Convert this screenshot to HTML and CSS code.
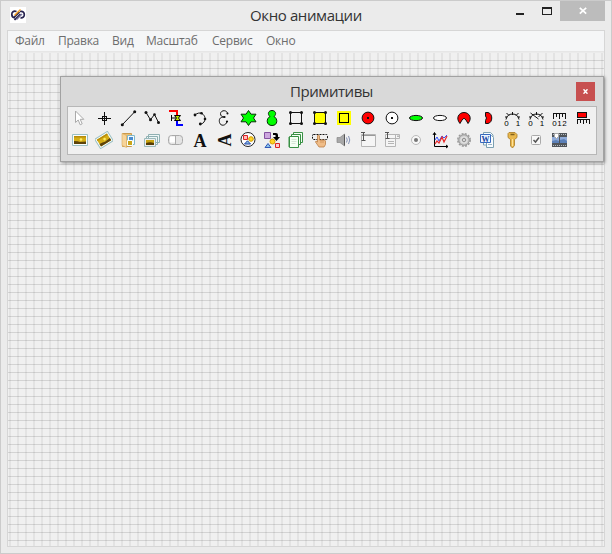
FILE: index.html
```html
<!DOCTYPE html>
<html lang="ru">
<head>
<meta charset="utf-8">
<title>Окно анимации</title>
<link rel="stylesheet" href="styles.css">
</head>
<body>
<div class="window">
  <header class="titlebar">
    <svg class="logo" viewBox="0 0 16 16"><path fill="#fff" d="M0 0h16v16H0z"/><g fill="none" stroke="#27234f" stroke-width="1.700"><path d="M6.500 4.500C3.500 3.500 1.700 5 1.800 7.500c0 2 1 3.200 3.200 3.500"/><path d="M10 4.500c3-.8 4.500 1.200 4.300 3.500-.2 2-1.700 3.200-3.800 2.800"/><path d="M4 10.500L9.500 5M4.500 13l6-6"/></g><path d="M4.500 8.500L10.500 2.500" stroke="#f29a1c" stroke-width="1.500"/><path d="M6.500 12.500L12 7" stroke="#77739a" stroke-width="1.500"/></svg>
    <h1 class="title">Окно анимации</h1>
    <div class="controls">
      <svg class="min" viewBox="0 0 8 20"><path d="M0 12h8v2H0z" fill="#222"/></svg>
      <svg class="max" viewBox="0 0 10 20"><path d="M0 6h10v8H0zM1 8v5h8V8z" fill="#222" fill-rule="evenodd"/></svg>
      <div class="close"><svg viewBox="0 0 8 8"><path d="M.8 .8L7.200 6.700M7.200 .8L.8 6.700" stroke="#fff" stroke-width="1.700"/></svg></div>
    </div>
  </header>
  <main class="client">
    <nav class="menu"><span class="m1">Файл</span><span class="m2">Правка</span><span class="m3">Вид</span><span class="m4">Масштаб</span><span class="m5">Сервис</span><span>Окно</span></nav>
    <div class="canvas"></div>
  </main>
</div>
<section class="palette">
  <header class="palette-head"><h2>Примитивы</h2><div class="palette-close"><svg viewBox="0 0 5 5"><path d="M.5 .3L4.500 4.700M4.500 .3L.5 4.700" stroke="#fff" stroke-width="1.500"/></svg></div></header>
  <div class="tools">
    <svg viewBox="0 0 18 18"><path d="M4.500 2v11.500l2.700-2.500 2 4.800 2-1-2-4.500h3.600z" fill="#fff" stroke="#aaa"/></svg>
    <svg viewBox="0 0 18 18" class="ink"><path d="M3 9.500h13M9.500 3v13M7.500 7.500h4v4h-4z" shape-rendering="crispEdges"/></svg>
    <svg viewBox="0 0 18 18" class="ink"><path d="M3.500 15.500L15.500 3"/><g class="dots"><circle cx="3.300" cy="15.700" r="1.500"/><circle cx="15.700" cy="2.800" r="1.500"/></g></svg>
    <svg viewBox="0 0 18 18" class="ink"><path d="M3 3.500l4.500 7.200 4-5.200 4 8"/><g class="dots"><circle cx="3" cy="3.500" r="1.500"/><circle cx="7.500" cy="10.700" r="1.500"/><circle cx="11.500" cy="5.500" r="1.300"/><circle cx="15.500" cy="13.500" r="1.500"/></g></svg>
    <svg viewBox="0 0 18 18"><g shape-rendering="crispEdges" fill="none" stroke-width="2"><path d="M2 2h8v4" stroke="red"/><path d="M10 12v4h6" stroke="#00f"/></g><path d="M4.500 6v6M4.500 9h5" stroke="#000"/><path d="M7.500 6.500h6L11.500 9l2 2.500h-6L9.500 9z" fill="#b8e000" stroke="#000"/></svg>
    <svg viewBox="0 0 18 18" class="ink"><path d="M4 6C6 4 9 3.500 11 4.500c3 2 4 5.500 2 8.500-1 1.500-2.500 2-4 2.300"/><g class="dots"><circle cx="4" cy="6" r="1.400"/><circle cx="10.500" cy="4.300" r="1.300"/><circle cx="14" cy="10" r="1.300"/><circle cx="9.300" cy="15" r="1.400"/></g></svg>
    <svg viewBox="0 0 18 18" class="ink"><path d="M12.500 5C12.500 .7 6 .7 5.500 4.500 5.500 7 7 8 9.500 8 4 8 4 11 4.500 13.500c1 4 6.500 3.500 7.500-1"/><g class="dots"><circle cx="12.500" cy="4.500" r="1"/><circle cx="9.500" cy="8" r="1.100"/><circle cx="12" cy="12.500" r="1.100"/></g></svg>
    <svg viewBox="0 0 18 18"><path d="M9.500 1.500L12 5.200h5L14.500 9l2.500 3.800h-5l-2.500 3.700L7 12.800H2L4.500 9 2 5.200h5z" fill="#0f0" stroke="#063006"/></svg>
    <svg viewBox="0 0 18 18"><path d="M7 7.500C4 5 5.500 1.500 9 1.500s5 3.500 2 6c4 2 4 9-2 9s-6-7-2-9z" fill="#0f0" stroke="#042604"/></svg>
    <svg viewBox="0 0 18 18" class="ink"><path d="M3.500 3.500h11v11h-11z"/><g class="dots"><circle cx="3.500" cy="3.500" r="1.500"/><circle cx="14.500" cy="3.500" r="1.500"/><circle cx="3.500" cy="14.500" r="1.500"/><circle cx="14.500" cy="14.500" r="1.500"/></g></svg>
    <svg viewBox="0 0 18 18" class="ink"><path d="M3.500 3.500h11v11h-11z" fill="#ff0"/><g class="dots"><circle cx="3.500" cy="3.500" r="1.500"/><circle cx="14.500" cy="3.500" r="1.500"/><circle cx="3.500" cy="14.500" r="1.500"/><circle cx="14.500" cy="14.500" r="1.500"/></g></svg>
    <svg viewBox="0 0 18 18" shape-rendering="crispEdges"><path fill="#ff0" d="M2 2h14v14H2z"/><path d="M4.500 4.500h9v9h-9z" fill="#ff0" stroke="#000"/></svg>
    <svg viewBox="0 0 18 18" class="ink"><circle cx="9" cy="9" r="5.900" fill="red"/><path class="dots" d="M8 8h2v2H8z"/></svg>
    <svg viewBox="0 0 18 18" class="ink"><circle cx="9" cy="9" r="5.900" fill="#fff"/><path class="dots" d="M8 8h2v2H8z"/></svg>
    <svg viewBox="0 0 18 18" class="ink"><ellipse cx="9" cy="9" rx="6.500" ry="2.600" fill="#0f0"/></svg>
    <svg viewBox="0 0 18 18" class="ink"><ellipse cx="9" cy="9" rx="6.500" ry="2.600" fill="#fff"/></svg>
    <svg viewBox="0 0 18 18" class="ink"><path d="M5 14.500C.5 9.500 3.500 3.500 9 3.500s8.500 6 4 11L11 11 9 9.200 7 11z" fill="red"/></svg>
    <svg viewBox="0 0 18 18" class="ink"><path d="M6.500 3.500h2.500c5 1 5 10 0 11H6.500V11.500L7.500 9 6.500 7z" fill="red"/></svg>
    <svg viewBox="0 0 18 18" class="ink"><path d="M3 10.500C3.500 7 6 5 9.500 5s6 2 6.500 5.500M9.500 3v3M3.500 4l2.500 2.500M15.500 4l-2.500 2.500M2 8h2.500M14.500 8H17"/><text x="1.200" y="17">0</text><text x="12.700" y="17">1</text></svg>
    <svg viewBox="0 0 18 18" class="ink"><path d="M3 10.500C3.500 7 6 5 9.500 5s6 2 6.500 5.500M9.500 3v3M3.500 4l8 6M15.500 4l-4 4M2 8h2.500M14.500 8H17"/><text x="1.200" y="17">0</text><text x="12.700" y="17">1</text></svg>
    <svg viewBox="0 0 18 18" class="ink"><path shape-rendering="crispEdges" d="M2.500 10V4.500h12V10M5.500 5v3M8.500 5v5M11.500 5v3"/><text x="1.200" y="17">0</text><text x="6.300" y="17">1</text><text x="11.300" y="17">2</text></svg>
    <svg viewBox="0 0 18 18" class="ink" shape-rendering="crispEdges"><path fill="red" d="M2.500 3.500h9v5h-9z"/><path d="M2.500 15v-4.500h12V15M5.500 11v3M8.500 11v4M11.500 11v3"/></svg>

    <svg viewBox="0 0 18 18"><use href="#photo"/></svg>
    <svg viewBox="0 0 18 18"><g transform="rotate(-32 9 9)"><use href="#photo"/></g></svg>
    <svg viewBox="0 0 18 18"><path d="M3.500 2.500h9v13h-9z" fill="#edbd70" stroke="#c99a4d"/><path d="M8.500 4.500h7v9h-7z" fill="#f5fbff" stroke="#80b8c8"/><path fill="#4a8cd0" d="M10 6h4v4h-4z"/><path d="M8.500 9.500h5v5h-5z" fill="#c9a41a" stroke="#f9ffff"/><path d="M3 2.500l4.500 2V16.500l-4.500-2z" fill="#f6d49a" stroke="#d9aa5c" stroke-width=".6"/></svg>
    <svg viewBox="0 0 18 18"><path d="M5.500 3.500h11v8h-11zM3.500 5.500h11v8h-11z" fill="#eef6f7" stroke="#8fb0b2"/><path d="M1.500 7.500h11v8h-11z" fill="#eee" stroke="#9ababb"/><path d="M3 9h8v5H3z" fill="#c8a310"/><path d="M3 12c3-1 5-1 8 0v2H3z" fill="#553c05"/></svg>
    <svg viewBox="0 0 18 18"><rect x="1.500" y="4.500" width="14" height="9" rx="3" fill="#e4e4e4" stroke="#aaa"/><path d="M3 5.500h5v6H3z" fill="#fff"/><path d="M8.500 5v8" stroke="#aaa"/></svg>
    <svg viewBox="0 0 18 18" class="letter"><text x="9" y="15.500" text-anchor="middle">A</text></svg>
    <svg viewBox="0 0 18 18" class="letter"><text transform="translate(15.500 9) rotate(-90)" text-anchor="middle">A</text></svg>
    <svg viewBox="0 0 18 18"><circle cx="9" cy="8.500" r="7" fill="#fff" stroke="#222"/><path d="M4.500 4.500h4v4h-4z" fill="#fbb" stroke="#d22"/><circle cx="12" cy="8" r="2.300" fill="#ffd52a" stroke="#c90"/><path d="M5.500 13h6L8.500 9.800z" fill="#8bd" stroke="#24a"/></svg>
    <svg viewBox="0 0 18 18"><path d="M1.500 1.500h6v6h-6z" fill="#cda7df" stroke="#8451a0"/><path d="M10 2h3q2 0 2 2v2h2l-3.500 4L10 6h2.500V4H10z"/><circle cx="9.500" cy="10.500" r="2.500" fill="#ffd224" stroke="#daa000"/><path d="M2 16.500h6l-3-4z" fill="#8cc3e7" stroke="#3258b8"/><path d="M12.500 12.500h4v4h-4z" fill="#fcc" stroke="#d22"/></svg>
    <svg viewBox="0 0 18 18"><g fill="#f4fff4" stroke="#389044"><path d="M6.500 1.500h9v10h-9z"/><path d="M4.500 3.500h9v10h-9z"/><path d="M2.500 5.500h9v11h-9z"/></g><path d="M4.500 8.500h5M4.500 10.500h5M4.500 12.500h4" stroke="#d4e5d5"/><path d="M1 7h2M1 9h2M1 11h2M1 13h2M1 15h2" stroke="#389044"/></svg>
    <svg viewBox="0 0 18 18"><rect x="1.500" y="3.500" width="15" height="5" rx="1" fill="none" stroke="#111" stroke-dasharray="2 1"/><path d="M6.500 4.500q1.500-1 2 .5V9h5l1 1v3.500L13 16H8L4.500 11l.5-1 1.500 1z" fill="#f0bd88" stroke="#bb7f46" stroke-width=".8"/><path d="M10 9v3M12 9v3" stroke="#c98a50" stroke-width=".7"/></svg>
    <svg viewBox="0 0 18 18"><path d="M2 6.500h3L9.500 3v12L5 11.500H2z" fill="#a8a8a8" stroke="#888" stroke-width=".7"/><path d="M9.500 3.500v11" stroke="#555"/><path d="M11.500 6.500q1.500 2.500 0 5M13.500 5q2.500 4 0 8" fill="none" stroke="#8290b4"/></svg>
    <svg viewBox="0 0 18 18" class="field"><path d="M2.500 3.500h14v12h-14z"/><path d="M3 4.500h13" stroke="#999"/><path class="beam" d="M2 1.500h4M4.500 1.500v8M2.500 9.500h4"/></svg>
    <svg viewBox="0 0 18 18" class="field"><path d="M2.500 3.500h14v4h-14zM2.500 7.500h10v8h-10zM12.500 3.500v4M5 10.500h6M5 12.500h6"/><path d="M14 5h2l-1 1z"/><path class="beam" d="M2 1.500h4M4.500 1.500v6M2.500 7.500h4"/></svg>
    <svg viewBox="0 0 18 18"><circle cx="9" cy="9" r="4.500" fill="#f8f8f8" stroke="#bbb"/><circle cx="9" cy="9" r="2" fill="#777"/></svg>
    <svg viewBox="0 0 18 18"><path d="M3.500 2v13.500H17" fill="none" stroke="#000"/><path d="M2 4l1.500-2.500L5 4M15 14l2 1.500-2 1.500" fill="none" stroke="#000"/><path d="M4 9l2-3 2 4 3-5 2 2 3-3" fill="none" stroke="#3454ff"/><path d="M4 13l2-3 2 2 3-6 2 5 3-6" fill="none" stroke="#e72828" stroke-width="1.200"/></svg>
    <svg viewBox="0 0 18 18"><circle cx="9" cy="9" r="5.300" fill="#c8c8c8" stroke="#999"/><circle cx="9" cy="9" r="6.200" fill="none" stroke="#999" stroke-width="1.500" stroke-dasharray="2 1.250"/><circle cx="9" cy="9" r="3.200" fill="none" stroke="#e9e9e9"/><circle cx="9" cy="9" r="1.500" fill="#fafafa" stroke="#888"/></svg>
    <svg viewBox="0 0 18 18"><path d="M4.500 1.500h7l2.500 2.500v10H4.500z" fill="#f8fcff" stroke="#7ba0b2"/><path d="M7.500 4.500h5l2 2v10h-7z" fill="#f8fcff" stroke="#7ba0b2"/><path d="M9 13.500h4" stroke="#9db6c6"/><path d="M1.500 3.500h10v8h-10z" fill="#edf5ff" stroke="#3769bd"/><text class="word" x="2.500" y="10.500">W</text></svg>
    <svg viewBox="0 0 18 18"><path d="M6 1.500h6l2 2v3l-2.500 2v6L9.500 17l-2-2V8.500L5 6.500v-4z" fill="#e9b84e" stroke="#a87b24" stroke-width=".8"/><path d="M7.500 3.500h4" stroke="#80611e" stroke-width="1.500"/><path d="M9.500 8v7" stroke="#ffe29a"/></svg>
    <svg viewBox="0 0 18 18"><rect x="4.500" y="4.500" width="9" height="9" rx="1" fill="#f8f8f8" stroke="#aaa"/><path d="M6.500 9l2 2 3.500-4.500" fill="none" stroke="#555" stroke-width="1.500"/></svg>
    <svg viewBox="0 0 18 18"><path fill="#50555a" d="M1 2h15v14H1z"/><path fill="#8fabd9" d="M1 6h7v6H1zM9 6h7v6H9z"/><path d="M1 10l4-1 3 1v2H1zM9 9l4-1 3 2v2H9z" fill="#5b80b8"/><path d="M2 3.500h14M2 14.500h14" stroke="#b8bdc2" stroke-dasharray="1 1"/><path d="M3.500 2.500h4v3l-2 2-2-2z" fill="#fff" stroke="#aaa"/></svg>
  </div>
</section>
<svg class="defs" width="0" height="0"><defs><g id="photo"><path d="M1.500 3.500h15v11h-15z" fill="#f9fdfd" stroke="#9cc0c4"/><path d="M3 5h12v8H3z" fill="#d4ad16"/><path d="M3 5h12v1.500H3z" fill="#b88d0c"/><path d="M3 10q4 0 6 1l6-.5V13H3z" fill="#5c430a"/><circle cx="10" cy="8.500" r="1.300" fill="#ffed64"/></g></defs></svg>
</body>
</html>
```
FILE: styles.css
```css
* { box-sizing: border-box; }
body { margin: 0; width: 612px; height: 554px; overflow: hidden; font-family: "Open Sans", "Noto Sans", sans-serif; }
svg { display: block; }
.window { display: flex; flex-direction: column; width: 612px; height: 554px; padding: 0 6px 6px; border: 1px solid #cbcbcb; background: #ebebeb; }
.titlebar { display: grid; grid-template-columns: 150px 1fr 150px; flex: 0 0 29px; }
.logo { width: 16px; height: 16px; margin: 6px 0 0 3px; }
.title { margin: 3px 0 0; text-align: center; white-space: nowrap; font-size: 15px; line-height: 22px; font-weight: 400; letter-spacing: -.4px; color: #333; }
.controls { display: flex; justify-content: flex-end; height: 20px; }
.min { width: 8px; height: 20px; margin-right: 18px; }
.max { width: 10px; height: 20px; margin-right: 8px; }
.close { display: flex; align-items: center; justify-content: center; width: 45px; height: 20px; background: #bcbcbc; }
.close svg { width: 8px; height: 8px; }
.client { display: flex; flex-direction: column; flex: 1; border: 1px solid #d6d6d6; }
.menu { display: flex; flex: 0 0 19px; padding-left: 7px; border-bottom: 1px solid #e6e6e6; background: #f5f6f7; color: #6d6d6d; font-size: 12px; line-height: 20px; letter-spacing: -.25px; white-space: nowrap; }
.m1 { width: 43px; }
.m2 { width: 54px; }
.m3 { width: 34px; }
.m4 { width: 66px; }
.m5 { width: 54px; }
.canvas {
  flex: 1;
  margin-top: 1px;
  background-color: #f0f0f0;
  background-image:
    repeating-linear-gradient(to bottom, transparent 0 7px, rgba(0,0,0,.12) 7px 8px),
    repeating-linear-gradient(to right, transparent 0 1px, #e3e3e3 1px 3px, transparent 3px 8px);
}
.palette { position: absolute; left: 60px; top: 76px; width: 544px; height: 86px; padding: 0 6px; border: 1px solid #a2a2a2; background: #d9d9d9; box-shadow: 1px 1px 3px rgba(0,0,0,.4); }
.palette-head { display: grid; grid-template-columns: 50px 1fr 50px; height: 29px; }
.palette h2 { grid-column: 2; margin: 3px 1px 0 0; text-align: center; font-size: 15px; line-height: 22px; font-weight: 400; letter-spacing: -.45px; color: #333; }
.palette-close { display: flex; align-items: center; justify-content: center; justify-self: end; width: 19px; height: 19px; margin: 5px 2px 0 0; background: #c75050; }
.palette-close svg { width: 5px; height: 5px; }
.tools { display: grid; grid-template-columns: repeat(22, 24px); grid-auto-rows: 22px; align-content: start; justify-items: center; align-items: center; height: 49px; border: 1px solid #b7b7b7; background: #f0f0f0; }
.tools svg { width: 18px; height: 18px; }
.ink { fill: none; stroke: #111; stroke-width: 1; }
.dots { fill: #111; stroke: none; }
.ink text { fill: #000; stroke: none; font: 8px "Liberation Sans", sans-serif; }
.letter { overflow: visible; }
.letter text { font: bold 18px/1 "Liberation Serif", serif; fill: #111; }
.field { fill: #f5f5f5; stroke: #b5b5b5; }
.field .beam { fill: none; stroke: #555; }
.word { font: bold 8px "Liberation Serif", serif; fill: #1745a2; }
.defs { position: absolute; }
```
